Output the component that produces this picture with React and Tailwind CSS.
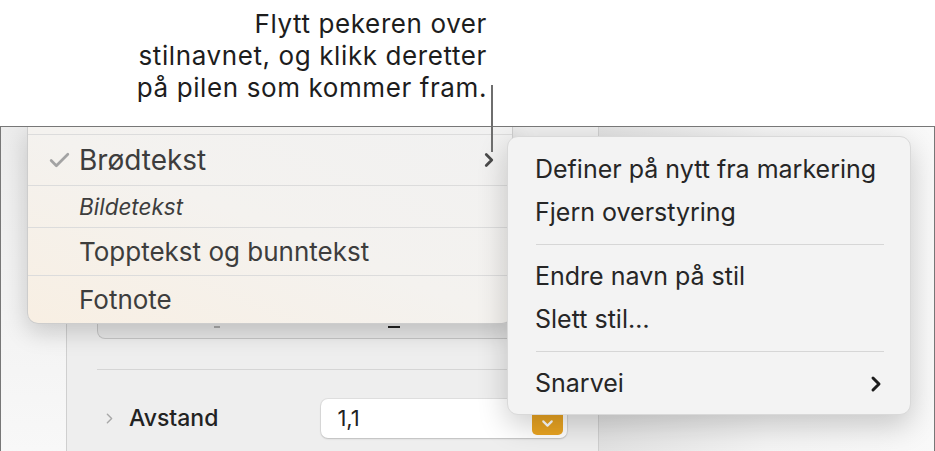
import { Check, ChevronRight, ChevronDown } from "lucide-react";

// ─── Menu data ──────────────────────────────────────────────────────────────

const styleRows = [
  { label: "Brødtekst", checked: true, h: "h-[51px]", text: "text-[28px]" },
  { label: "Bildetekst", italic: true, h: "h-[42px]", text: "text-[22.5px]" },
  { label: "Topptekst og bunntekst", h: "h-[48px]", text: "text-[26px]" },
  { label: "Fotnote", h: "h-[47px]", text: "text-[26px]" },
];

function SubItem({ children, arrow }) {
  return (
    <div className="h-[43px] flex items-center justify-between pl-[27px] pr-[22px] text-[25px] text-[#262626]">
      <span>{children}</span>
      {arrow && <ChevronRight size={24} strokeWidth={3} className="text-[#1c1c1c]" />}
    </div>
  );
}

function SubDivider() {
  return (
    <div className="h-[21px] flex items-center pl-[28px] pr-[26px]">
      <div className="h-px w-full bg-[#d6d6d6]" />
    </div>
  );
}

export default function App() {
  return (
    <div className="relative w-[935px] h-[451px] overflow-hidden bg-white font-['Inter','Liberation_Sans',sans-serif]">
      {/* callout */}
      <div className="h-[126px] flex justify-end pr-[448px] pt-[8px]">
        <p className="text-right text-[26px] leading-[32px] tracking-[0.6px] text-[#1d1d1d]">
          Flytt pekeren over
          <br />
          stilnavnet, og klikk deretter
          <br />
          på pilen som kommer fram.
        </p>
      </div>
      <div className="absolute left-[491px] top-[85px] w-[2px] h-[67px] bg-[#6e6e6e] z-30" />

      {/* window */}
      <div className="relative h-[325px] border-t border-l border-r border-[#777777] flex overflow-hidden">
        <div className="w-[65px] bg-gradient-to-b from-[#ececec] to-[#f8f8f8]" />
        <div className="w-[533px] border-l border-r border-[#cfcfcf] bg-[#eeeeee]">
          {/* segmented control (mostly hidden) */}
          <div className="ml-[30px] mt-[160px] w-[500px] h-[52px] rounded-b-[8px] bg-[#e7e7e7] border-b border-l border-[#c6c6c6] flex items-end pb-[10px]">
            <div className="w-[235px] flex justify-center">
              <div className="ml-[2px] w-[6px] h-[2px] bg-[#a9a9a9]" />
            </div>
            <div className="w-px h-[8px] self-end mb-[6px] bg-[#bdbdbd]" />
            <div className="w-[120px] flex justify-center">
              <div className="w-[12px] h-[2px] bg-[#222222]" />
            </div>
          </div>
          <div className="ml-[30px] mt-[30px] w-[500px] h-px bg-[#d5d5d5]" />
          <div className="ml-[34px] mt-[28px] flex items-center h-[40px]">
            <ChevronDown size={17} strokeWidth={2} className="-rotate-90 text-[#a8a8a8]" />
            <span className="ml-[11px] text-[23px] font-medium text-[#222222]">Avstand</span>
            <div className="ml-[103px] w-[246px] h-[39px] rounded-[7px] bg-white shadow-[0_0_0_1px_rgba(0,0,0,0.06),0_1px_2px_rgba(0,0,0,0.15)] flex items-center justify-between pl-[16px] pr-[4px]">
              <span className="text-[22px] text-[#222222]">1,1</span>
              <div className="w-[31px] h-[33px] rounded-[5px] bg-[#e9a422] flex items-end justify-center pb-[3px]">
                <ChevronDown size={17} strokeWidth={3} className="text-white" />
              </div>
            </div>
          </div>
        </div>
        <div className="flex-1 bg-gradient-to-r from-[#e2e2e2] via-[#f4f4f4] to-[#f9f9f9]" />

        {/* style popup */}
        <div className="absolute left-[26px] top-0 w-[486px] rounded-b-[11px] border-l border-r border-b border-[#cdcdcd] bg-gradient-to-tr from-[#f8efe3] via-[#f4f2ef] to-[#f1f1f1] shadow-[0_8px_24px_rgba(0,0,0,0.18)] z-10">
          <div className="h-[8px] border-b border-[#dcdcdc]" />
          {styleRows.map((r, i) => (
            <div
              key={r.label}
              className={`${r.h} flex items-center pl-[19px] pr-[12px] ${i < styleRows.length - 1 ? "border-b border-[#dcdcdc]" : ""}`}
            >
              <div className="w-[32px] flex items-center">
                {r.checked && <Check size={25} strokeWidth={2.6} className="text-[#a3a3a3]" />}
              </div>
              <span className={`flex-1 ${r.text} text-[#3d3d3d] ${r.italic ? "italic" : ""}`}>{r.label}</span>
              {r.checked && <ChevronRight size={22} strokeWidth={3} className="text-[#4a4a4a]" />}
            </div>
          ))}
        </div>

        {/* submenu */}
        <div className="absolute left-[506px] top-[9px] w-[404px] h-[279px] rounded-[11px] bg-[#f3f3f3] border border-[#d9d9d9] shadow-[0_10px_30px_rgba(0,0,0,0.2)] pt-[11px] z-20">
          <SubItem>Definer på nytt fra markering</SubItem>
          <SubItem>Fjern overstyring</SubItem>
          <SubDivider />
          <SubItem>Endre navn på stil</SubItem>
          <SubItem>Slett stil…</SubItem>
          <SubDivider />
          <SubItem arrow>Snarvei</SubItem>
        </div>
      </div>
    </div>
  );
}
